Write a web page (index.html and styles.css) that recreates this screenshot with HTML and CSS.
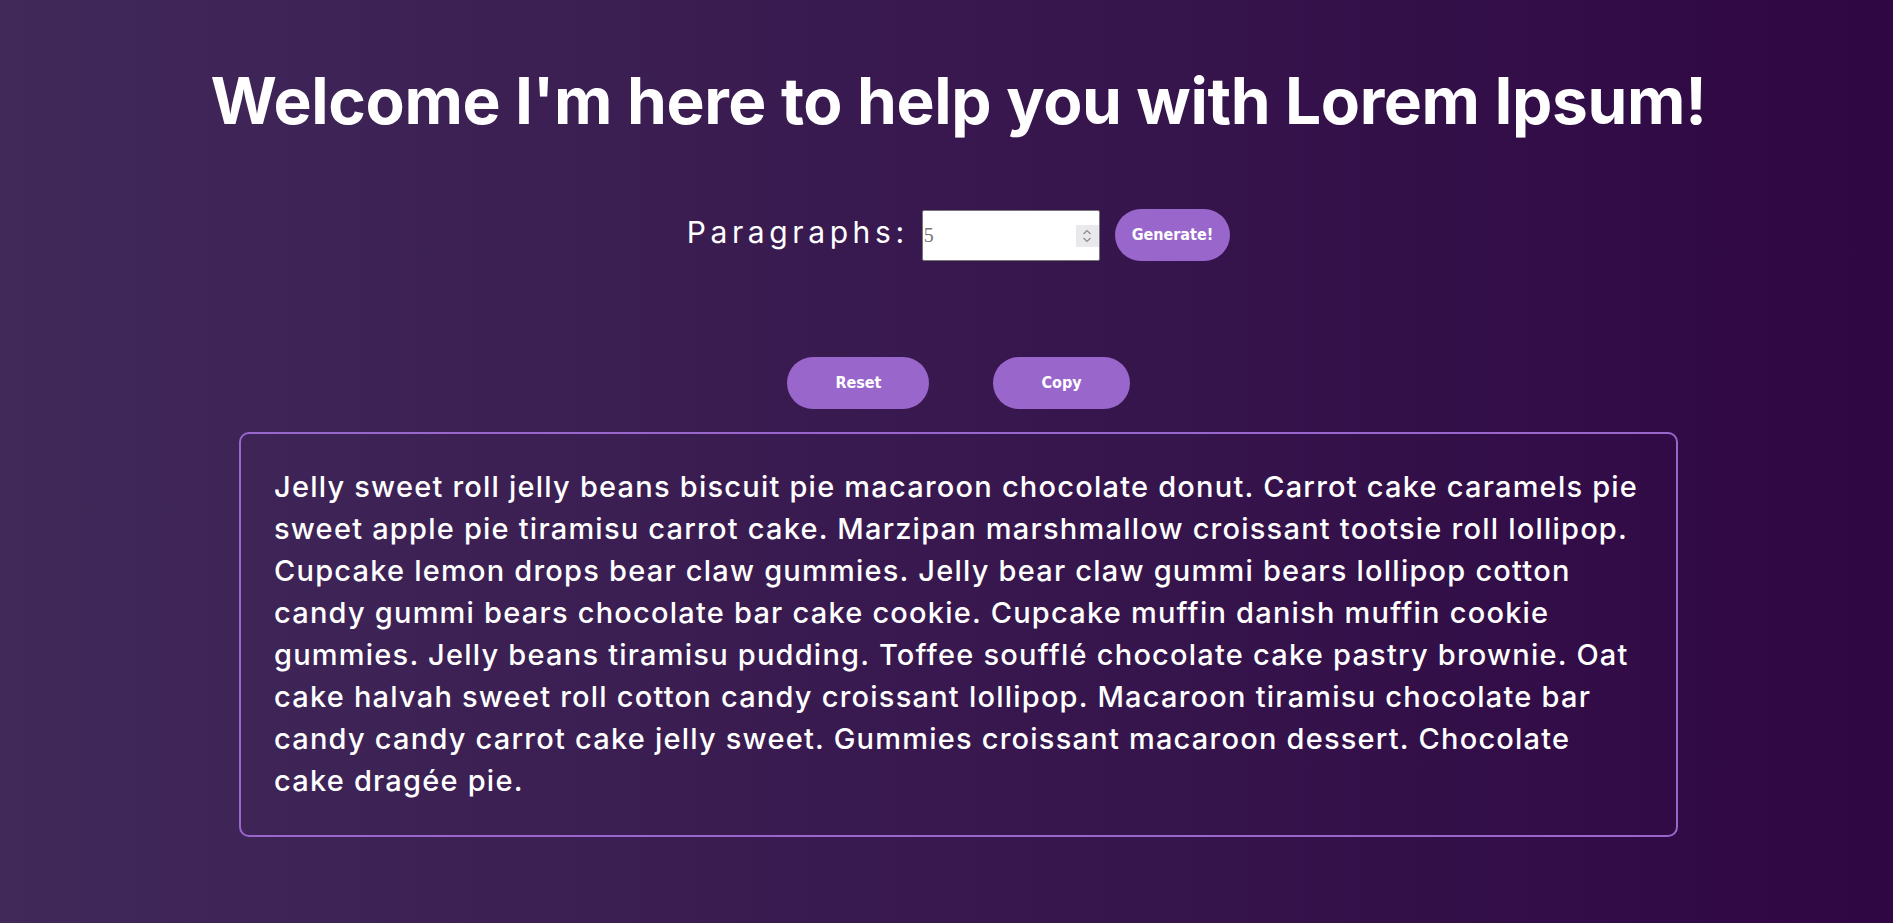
FILE: index.html
```html
<!DOCTYPE html>
<html lang="en">
<head>
<meta charset="utf-8">
<title>Lorem Ipsum Generator</title>
<link rel="stylesheet" href="styles.css">
</head>
<body>
<main class="page">
  <h1 class="title">Welcome I'm here to help you with Lorem Ipsum!</h1>
  <form class="controls">
    <label class="label" for="amount">Paragraphs:</label>
    <span class="number-field">
      <input class="number-input" id="amount" type="number" placeholder="5">
      <span class="spinner" aria-hidden="true">
        <svg width="10" height="16" viewBox="0 0 10 16"><path d="M1.5 6 L5 2.5 L8.5 6" fill="none" stroke="#8a8a8a" stroke-width="1.2"/><path d="M1.5 10 L5 13.5 L8.5 10" fill="none" stroke="#8a8a8a" stroke-width="1.2"/></svg>
      </span>
    </span>
    <button class="btn btn-generate" type="button">Generate!</button>
  </form>
  <div class="actions">
    <button class="btn btn-action" type="button">Reset</button>
    <button class="btn btn-action" type="button">Copy</button>
  </div>
  <section class="output">
    <p class="text">Jelly sweet roll jelly beans biscuit pie macaroon chocolate donut. Carrot cake caramels pie sweet apple pie tiramisu carrot cake. Marzipan marshmallow croissant tootsie roll lollipop. Cupcake lemon drops bear claw gummies. Jelly bear claw gummi bears lollipop cotton candy gummi bears chocolate bar cake cookie. Cupcake muffin danish muffin cookie gummies. Jelly beans tiramisu pudding. Toffee soufflé chocolate cake pastry brownie. Oat cake halvah sweet roll cotton candy croissant lollipop. Macaroon tiramisu chocolate bar candy candy carrot cake jelly sweet. Gummies croissant macaroon dessert. Chocolate cake dragée pie.</p>
  </section>
</main>
</body>
</html>
```

FILE: styles.css
```css
html, body {
  margin: 0;
  padding: 0;
}

body {
  min-height: 100vh;
  background: linear-gradient(to right, #41295a, #2f0743);
  color: #ffffff;
  font-family: Inter, "Noto Sans", sans-serif;
  overflow: hidden;
}

.page {
  padding: 62px 0 0 24px;
  display: flex;
  flex-direction: column;
  align-items: center;
}

.title {
  margin: 0;
  font-size: 64px;
  line-height: 77px;
  font-weight: 700;
  letter-spacing: -0.35px;
  text-align: center;
}

.controls {
  margin-top: 70px;
  display: flex;
  align-items: center;
}

.label {
  font-size: 30px;
  font-weight: 400;
  letter-spacing: 4.6px;
  margin-right: 13px;
  margin-top: -6px;
}

.number-field {
  position: relative;
  display: block;
  width: 178px;
  height: 51px;
}

.number-input {
  box-sizing: border-box;
  width: 178px;
  height: 51px;
  margin: 0;
  padding: 0 0 0 1px;
  border: 1px solid #767676;
  border-radius: 2px;
  background: #ffffff;
  font-family: "Liberation Serif", serif;
  font-size: 20px;
  color: #757575;
  -moz-appearance: textfield;
  appearance: textfield;
}

.number-input::placeholder {
  color: #757575;
  opacity: 1;
}

.number-input::-webkit-inner-spin-button,
.number-input::-webkit-outer-spin-button {
  -webkit-appearance: none;
  margin: 0;
}

.spinner {
  position: absolute;
  right: 1px;
  top: 15px;
  width: 23px;
  height: 22px;
  background: #e9e9ed;
  display: flex;
  align-items: center;
  justify-content: center;
}

.btn {
  border: none;
  background: #9966cc;
  color: #ffffff;
  font-family: "DejaVu Sans Condensed", "DejaVu Sans", sans-serif;
  font-stretch: semi-condensed;
  font-weight: 700;
  font-size: 16px;
  line-height: 19px;
  border-radius: 999px;
  cursor: pointer;
}

.btn-generate {
  margin-left: 15px;
  padding: 16px 17px 17px;
}

.actions {
  margin-top: 96px;
  display: flex;
  gap: 64px;
}

.btn-action {
  padding: 16px 48px 17px;
}

.output {
  box-sizing: border-box;
  margin-top: 23px;
  width: 1439px;
  border: 2px solid #9966cc;
  border-radius: 10px;
  padding: 32px 32px 33px 33px;
}

.text {
  margin: 0;
  font-size: 29px;
  line-height: 42px;
  font-weight: 500;
  letter-spacing: 1.22px;
}
```
